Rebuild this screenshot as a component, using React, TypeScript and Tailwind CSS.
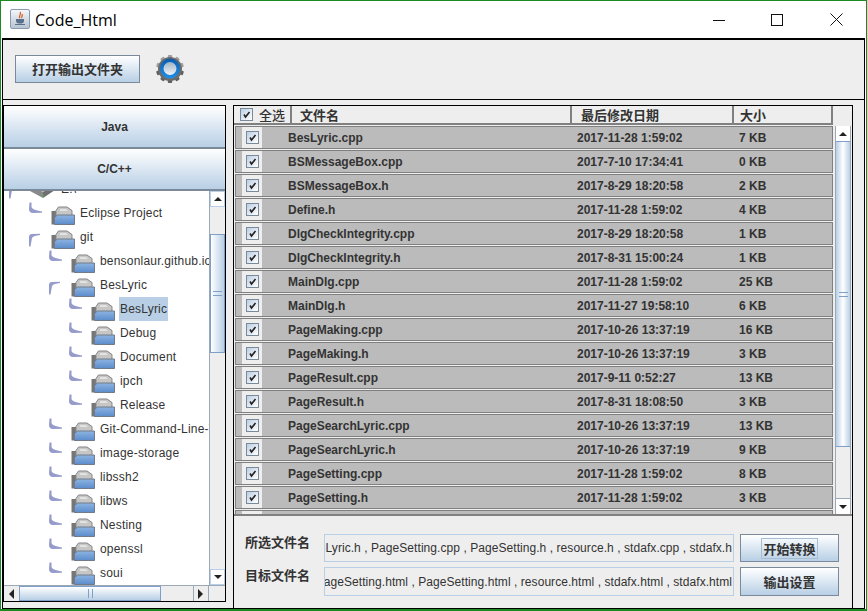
const cjk = "font-['Noto_Sans_CJK_SC',sans-serif]";
const btn = "border border-[#7a8a9a] bg-gradient-to-b from-white to-[#b8cfe5]";

const files = [
  ["BesLyric.cpp", "2017-11-28 1:59:02", "7 KB"],
  ["BSMessageBox.cpp", "2017-7-10 17:34:41", "0 KB"],
  ["BSMessageBox.h", "2017-8-29 18:20:58", "2 KB"],
  ["Define.h", "2017-11-28 1:59:02", "4 KB"],
  ["DlgCheckIntegrity.cpp", "2017-8-29 18:20:58", "1 KB"],
  ["DlgCheckIntegrity.h", "2017-8-31 15:00:24", "1 KB"],
  ["MainDlg.cpp", "2017-11-28 1:59:02", "25 KB"],
  ["MainDlg.h", "2017-11-27 19:58:10", "6 KB"],
  ["PageMaking.cpp", "2017-10-26 13:37:19", "16 KB"],
  ["PageMaking.h", "2017-10-26 13:37:19", "3 KB"],
  ["PageResult.cpp", "2017-9-11 0:52:27", "13 KB"],
  ["PageResult.h", "2017-8-31 18:08:50", "3 KB"],
  ["PageSearchLyric.cpp", "2017-10-26 13:37:19", "13 KB"],
  ["PageSearchLyric.h", "2017-10-26 13:37:19", "9 KB"],
  ["PageSetting.cpp", "2017-11-28 1:59:02", "8 KB"],
  ["PageSetting.h", "2017-11-28 1:59:02", "3 KB"],
];

const tree: { name: string; level: number; open?: boolean; selected?: boolean }[] = [
  { name: "Eclipse Project", level: 1 },
  { name: "git", level: 1, open: true },
  { name: "bensonlaur.github.io", level: 2 },
  { name: "BesLyric", level: 2, open: true },
  { name: "BesLyric", level: 3, selected: true },
  { name: "Debug", level: 3 },
  { name: "Document", level: 3 },
  { name: "ipch", level: 3 },
  { name: "Release", level: 3 },
  { name: "Git-Command-Line-Tools", level: 2 },
  { name: "image-storage", level: 2 },
  { name: "libssh2", level: 2 },
  { name: "libws", level: 2 },
  { name: "Nesting", level: 2 },
  { name: "openssl", level: 2 },
  { name: "soui", level: 2 },
];

function Handle({ open }: { open?: boolean }) {
  if (open) {
    return (
      <svg width="15" height="14" viewBox="0 0 15 14" className="mt-[6px] shrink-0">
        <path d="M1 13.5 L1 4 C1 2 2 1 4 1 L12 0.8 L12 2 C8 2.5 5 3 4 5 L2.5 13.5Z" fill="#959bcb" />
      </svg>
    );
  }
  return (
    <svg width="15" height="12" viewBox="0 0 15 12" className="mb-[10px] shrink-0">
      <path d="M1.5 0.5 L3.5 0.5 L3.5 5 C4 7 7 8 14 9.5 L14 10.8 L5 11 C2.5 11 1 9.5 1 7Z" fill="#959bcb" />
    </svg>
  );
}

function Folder() {
  return (
    <svg width="24" height="19" viewBox="0 0 24 19" className="mt-[4px] shrink-0">
      <defs>
        <linearGradient id="fb" x1="0" y1="0" x2="0" y2="1">
          <stop offset="0" stopColor="#8db4e2" />
          <stop offset="1" stopColor="#5b8ccb" />
        </linearGradient>
      </defs>
      <path d="M0.5 5 H6 V18.5 H0.5Z" fill="#767676" />
      <path d="M5 4.5 L7.5 1 H16 L21 4.5 L21 10 H5Z" fill="#c6c6c6" stroke="#858585" />
      <path d="M9 3 H15 L17 5 H9Z" fill="#e2e2e2" />
      <path d="M3.5 18.5 V11.5 L6.5 9 H23.5 V18.5Z" fill="url(#fb)" stroke="#707a88" />
    </svg>
  );
}

function Drive() {
  return (
    <svg width="27" height="20" viewBox="0 0 27 20" className="shrink-0">
      <path d="M1 6 L13 1 L26 6 L14 13Z" fill="#b8b8b8" />
      <path d="M1 6 L14 13 L14 19 L1 12Z" fill="#8a8a8a" />
      <path d="M14 13 L26 6 L26 11 L14 19Z" fill="#6f6f6f" />
      <path d="M14 15 V18" stroke="#4caf50" />
    </svg>
  );
}

function Arrow({ dir }: { dir: "up" | "down" | "left" | "right" }) {
  const pts = { up: "1,7 9,7 5,3", down: "1,3 9,3 5,7", left: "7,0 7,10 2,5", right: "2,0 2,10 7,5" }[dir];
  return (
    <svg width="10" height="10" viewBox="0 0 10 10">
      <polygon points={pts} fill="#222" />
    </svg>
  );
}

function Check() {
  return (
    <span className="flex h-[13px] w-[13px] shrink-0 items-center justify-center border border-[#7a8a9a] bg-gradient-to-br from-[#bcd0e4] to-white">
      <svg width="9" height="9" viewBox="0 0 9 9">
        <path d="M2 4.5 L3.5 7 L7.5 2" fill="none" stroke="#222" strokeWidth="1.6" />
      </svg>
    </span>
  );
}

function Gear() {
  const teeth = [0, 36, 72, 108, 144, 180, 216, 252, 288, 324];
  return (
    <svg width="30" height="30" viewBox="0 0 30 30">
      <defs>
        <linearGradient id="ring" x1="0" y1="0" x2="0" y2="1">
          <stop offset="0" stopColor="#0a5cb0" />
          <stop offset="1" stopColor="#1f8fe6" />
        </linearGradient>
        <linearGradient id="hub" x1="0" y1="0" x2="0" y2="1">
          <stop offset="0" stopColor="#9fb4c6" />
          <stop offset="1" stopColor="#eef2f5" />
        </linearGradient>
      </defs>
      {teeth.map((a) => (
        <rect key={a} x="12.8" y="1" width="4.4" height="6" rx="1" fill={a > 90 && a < 270 ? "#5f5f5f" : "#a0a0a0"} transform={`rotate(${a} 15 15)`} />
      ))}
      <circle cx="15" cy="15" r="12" fill="#6c6c6c" />
      <circle cx="15" cy="14.5" r="10" fill="url(#ring)" />
      <circle cx="15" cy="14.5" r="6.5" fill="url(#hub)" />
    </svg>
  );
}

export default function App() {
  return (
    <div className="flex h-[611px] w-[867px] flex-col overflow-hidden border border-b-2 border-[#1b8a22] bg-white font-['Liberation_Sans',sans-serif] text-[#333]">
      {/* title bar */}
      <div className="flex h-[37px] shrink-0 items-center pl-[9px]">
        <span className="mb-[2px] flex h-[20px] w-[20px] items-center justify-center rounded-[2px] border border-[#8a9ab0] bg-gradient-to-b from-[#f4f6f8] to-[#b8c4d2]">
          <svg width="12" height="15" viewBox="0 0 12 15">
            <path d="M6 1 C8 3 4 5 6 7 M8 3 C9 5 7 6 8 7" stroke="#d8541a" strokeWidth="1.2" fill="none" />
            <path d="M2 8 H10 V10 C10 12 8 12.5 6 12.5 C4 12.5 2 12 2 10Z" fill="#5a6f8a" />
            <path d="M1 13.5 H11" stroke="#5a6f8a" strokeWidth="1" />
          </svg>
        </span>
        <span className="ml-[5px] font-['Open_Sans',sans-serif] text-[16px] leading-none text-black">Code_Html</span>
        <div className="ml-auto flex items-center">
          <svg width="12" height="12" viewBox="0 0 12 12" className="mr-[46px]">
            <path d="M0 6.5 H12" stroke="#111" />
          </svg>
          <svg width="12" height="12" viewBox="0 0 12 12" className="mr-[47px]">
            <rect x="0.5" y="0.5" width="11" height="11" fill="none" stroke="#111" />
          </svg>
          <svg width="13" height="13" viewBox="0 0 13 13" className="mr-[23px]">
            <path d="M0.5 0.5 L12.5 12.5 M12.5 0.5 L0.5 12.5" stroke="#111" />
          </svg>
        </div>
      </div>

      {/* main frame */}
      <div className="ml-[1px] mr-[1px] flex min-h-0 flex-1 flex-col border-x border-b border-t-2 border-black bg-[#eeeeee]">
        <div className="flex h-[60px] shrink-0 items-center border-b border-black pl-[12px]">
          <button className={`${btn} ${cjk} mt-[-1px] h-[28px] w-[125px] text-[13px] font-bold`}>打开输出文件夹</button>
          <span className="ml-[15px] mt-[-2px]"><Gear /></span>
        </div>

        <div className="flex min-h-0 flex-1 pt-[5px]">
          {/* left panel */}
          <div className="mb-[6px] flex w-[223px] shrink-0 flex-col border border-black">
            <button className={`${btn} h-[43px] shrink-0 border-0 border-b-2 text-[12px] font-bold`}>Java</button>
            <button className={`${btn} h-[42px] shrink-0 border-0 border-b-2 text-[12px] font-bold`}>C/C++</button>
            <div className="flex min-h-0 flex-1 bg-white">
              <div className="min-w-0 flex-1 overflow-hidden pl-[4px] text-[12px] tracking-[0.2px]">
                <div className="-mt-[14px] flex h-[24px] items-center">
                  <Handle open />
                  <span className="ml-[6px]"><Drive /></span>
                  <span className="ml-[5px]">E:\</span>
                </div>
                {tree.map((t, i) => (
                  <div
                    key={i}
                    className={`flex h-[24px] items-center whitespace-nowrap ${
                      t.level === 1 ? "pl-[20px]" : t.level === 2 ? "pl-[40px]" : "pl-[60px]"
                    }`}
                  >
                    <Handle open={t.open} />
                    <span className="ml-[8px] flex"><Folder /></span>
                    <span className={`ml-[4px] flex h-[24px] items-center px-[1px] ${t.selected ? "bg-[#b8cfe5]" : ""}`}>
                      {t.name}
                    </span>
                  </div>
                ))}
              </div>
              {/* tree scrollbar */}
              <div className="flex w-[16px] shrink-0 flex-col border-l border-[#9aa8b8] bg-[#eeeeee]">
                <div className="flex h-[16px] items-center justify-center border border-[#b8cfe5] bg-white"><Arrow dir="up" /></div>
                <div className="h-[27px]" />
                <div className="flex h-[119px] items-center justify-center border border-[#7f9fc8] bg-gradient-to-r from-white to-[#b8cfe5]">
                  <div className="h-[5px] w-[9px] border-y border-[#7f9fc8]" />
                </div>
                <div className="flex-1" />
                <div className="flex h-[16px] items-center justify-center border border-[#b8cfe5] bg-white"><Arrow dir="down" /></div>
              </div>
            </div>
            <div className="flex h-[16px] shrink-0 items-stretch border-t border-[#9aa8b8] bg-[#eeeeee]">
              <div className="flex w-[15px] items-center justify-center"><Arrow dir="left" /></div>
              <div className="flex w-[142px] items-center justify-center border border-[#7f9fc8] bg-gradient-to-b from-white to-[#b8cfe5]">
                <div className="h-[9px] w-[5px] border-x border-[#7f9fc8]" />
              </div>
              <div className="w-[32px]" />
              <div className="flex w-[16px] items-center justify-center border-x border-[#9aa8b8]"><Arrow dir="right" /></div>
            </div>
          </div>

          {/* right panel */}
          <div className="ml-[7px] flex w-[620px] shrink-0 flex-col border-x border-t border-black">
            <div className="flex h-[19px] shrink-0 items-stretch pr-[19px] text-[13px]">
              <div className={`flex w-[58px] items-center border-b-2 border-r-2 border-[#808080] pl-[6px] font-medium ${cjk}`}>
                <Check />
                <span className="ml-[6px] leading-none">全选</span>
              </div>
              <div className={`flex w-[280px] items-center border-b-2 border-r-2 border-[#808080] pl-[8px] font-bold ${cjk}`}>文件名</div>
              <div className={`flex w-[162px] items-center border-b-2 border-r-2 border-[#808080] pl-[9px] font-bold ${cjk}`}>最后修改日期</div>
              <div className={`flex w-[99px] items-center border-b-2 border-r-2 border-[#808080] pl-[6px] font-bold ${cjk}`}>大小</div>
            </div>
            <div className="flex h-[391px] shrink-0 overflow-hidden border-b-2 border-[#808080] pl-[1px] pt-[1px]">
              <div className="w-[598px] shrink-0">
                {files.concat([["", "", ""]]).map(([name, date, size], i) => (
                  <div key={i} className="mb-[1px] flex h-[23px] items-center border border-[#808080] bg-[#bbbbbb] text-[12px] font-bold">
                    <span className="ml-[6px] flex h-full w-[20px] items-center justify-center bg-[#eeeeee]">
                      {name && <Check />}
                    </span>
                    <span className="ml-[26px] w-[289px]">{name}</span>
                    <span className="w-[162px]">{date}</span>
                    <span>{size}</span>
                  </div>
                ))}
              </div>
              <div className="ml-[2px] flex w-[16px] shrink-0 flex-col border-x border-[#9aa8b8]">
                <div className="flex h-[16px] items-center justify-center border-b border-[#7f9fc8] bg-white"><Arrow dir="up" /></div>
                <div className="flex h-[305px] items-center justify-center border-b border-[#7f9fc8] bg-gradient-to-r from-[#b8cfe5] via-white to-[#b8cfe5]">
                  <div className="h-[5px] w-[9px] border-y border-[#7f9fc8]" />
                </div>
                <div className="flex-1" />
                <div className="flex h-[16px] items-center justify-center border-t border-[#9aa8b8] bg-white"><Arrow dir="down" /></div>
              </div>
            </div>
            <div className={`flex flex-col gap-[5px] pl-[11px] pt-[18px] text-[13px] font-bold ${cjk}`}>
              {[
                ["所选文件名", "chLyric.h , PageSetting.cpp , PageSetting.h , resource.h , stdafx.cpp , stdafx.h", "开始转换"],
                ["目标文件名", "PageSetting.html , PageSetting.html , resource.html , stdafx.html , stdafx.html", "输出设置"],
              ].map(([label, value, action], i) => (
                <div key={label} className={`flex items-center ${i === 0 ? "h-[28px]" : "h-[29px]"}`}>
                  <span className={`w-[79px] shrink-0 ${i === 0 ? "pb-[12px]" : "pb-[14px]"}`}>{label}</span>
                  <div className="flex h-full w-[410px] shrink-0 items-center justify-end overflow-hidden whitespace-nowrap border border-[#b8cfe5] pr-[1px] font-['Liberation_Sans',sans-serif] text-[12px] font-normal tracking-[0.06px]">
                    {value}
                  </div>
                  <button className={`${btn} ml-[6px] flex h-full w-[99px] shrink-0 items-center justify-center`}>
                    <span className={i === 0 ? "border border-[#a8bdd4] px-px leading-[19px]" : ""}>{action}</span>
                  </button>
                </div>
              ))}
            </div>
          </div>
        </div>
      </div>
    </div>
  );
}
